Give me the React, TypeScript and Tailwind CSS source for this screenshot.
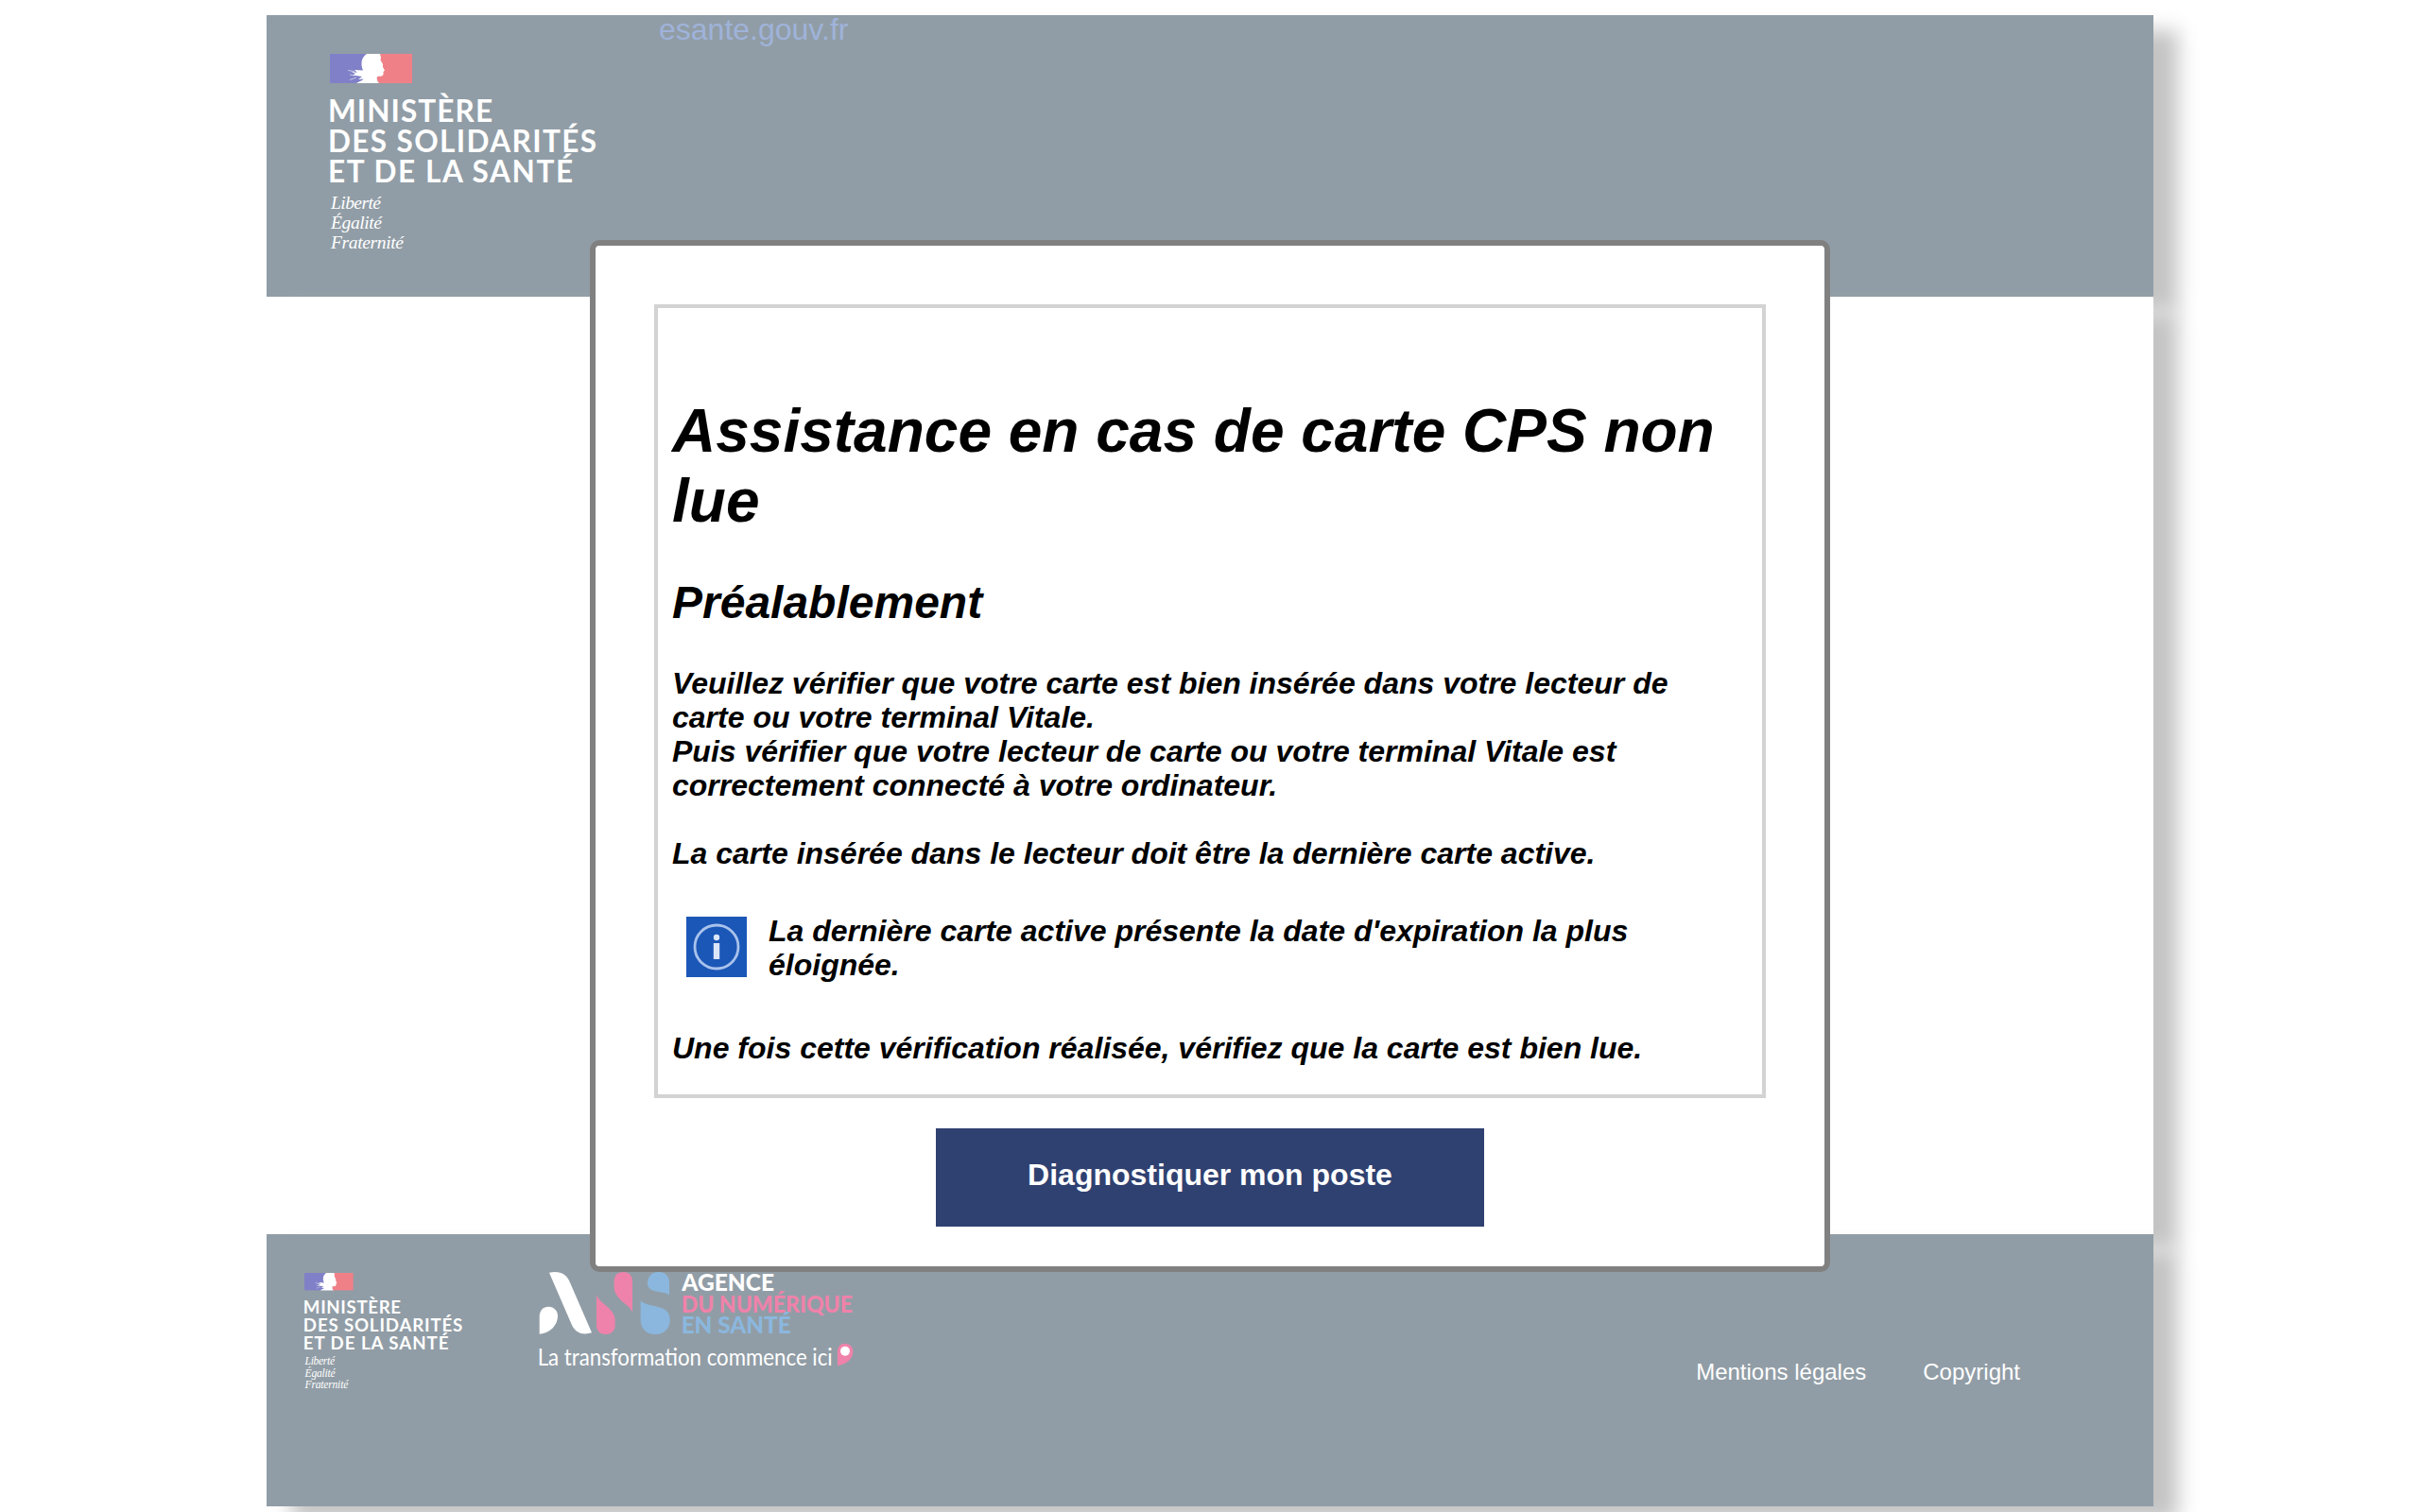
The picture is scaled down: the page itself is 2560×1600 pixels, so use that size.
const sans = "font-['Liberation_Sans',Arial,sans-serif]";

function Ministry({ className }: { className: string }) {
  return (
    <svg viewBox="0 0 290 212" className={`overflow-visible ${className}`} role="img">
      <rect x="0" y="0" width="40" height="31" fill="#8080c8" />
      <rect x="50" y="0" width="37" height="31" fill="#f08087" />
      <path
        d="M39 0H53L54 4L53.500 6.500L56 11L56 14L58 17.500L56.500 19L56.500 22L55 23.500L50 24C49 27 50.500 29.500 52 31H28C31 29 34.500 28.500 35.500 26.500L30 27L34 24L24 22.500L27 21L22 18.500L29 20L26 17L35 17.500C32.500 12 32.500 4 39 0Z"
        fill="#fff"
      />
      <path d="M19 17.500l7 1M21 22l5 1M21 27.500l7 -2.500" stroke="#fff" strokeWidth="0.9" opacity="0.6" fill="none" />
      <g fill="#fff" fontFamily="Lato, sans-serif" fontWeight="700" fontSize="31.500">
        <text x="-2" y="72.300" textLength="174">MINISTÈRE</text>
        <text x="-2" y="104.300" textLength="284">DES SOLIDARITÉS</text>
        <text x="-2" y="136.300" textLength="259">ET DE LA SANTÉ</text>
      </g>
      <g fill="#fff" fontFamily="Liberation Serif, serif" fontStyle="italic" fontSize="19.5">
        <text x="1" y="163.700" textLength="53">Liberté</text>
        <text x="1" y="184.700" textLength="54">Égalité</text>
        <text x="1" y="206" textLength="77">Fraternité</text>
      </g>
    </svg>
  );
}

function AgencyLogo() {
  return (
    <svg viewBox="60 45 1002 315" className="h-[105px] w-[334px] overflow-visible" role="img">
      <g fill="#fff">
        <path d="M62 245V190C62 170 74 158 91 158C108 158 120 171 120 188C120 215 96 243 62 245Z" />
        <path d="M93 50C125 44 148 52 159 82L228 241C200 249 176 243 163 212Z" />
      </g>
      <g fill="#ef82aa">
        <path d="M243 121C250 146 302 165 302 200V217C302 235 290 246 272 246C254 246 243 235 243 217Z" />
        <path d="M357 176C350 152 299 135 299 97V78C299 59 311 48 328 48C346 48 357 59 357 78Z" />
      </g>
      <g fill="#8bb7de">
        <path d="M474 122C462 106 405 119 405 84C405 62 420 48 440 48C461 48 474 61 474 82Z" />
        <path d="M383 138C400 164 476 145 476 199C476 229 458 246 430 246C401 246 383 229 383 199Z" />
      </g>
      <g fontFamily="Lato, sans-serif" fontWeight="900" fontSize="72">
        <text x="514" y="107" fill="#fff" textLength="293" lengthAdjust="spacingAndGlyphs">AGENCE</text>
        <text x="512" y="176" fill="#ef82aa" textLength="544" lengthAdjust="spacingAndGlyphs">DU NUMÉRIQUE</text>
        <text x="512" y="244" fill="#8bb7de" textLength="348" lengthAdjust="spacingAndGlyphs">EN SANTÉ</text>
      </g>
      <text x="56" y="345" fill="#fff" fontFamily="Lato, sans-serif" fontSize="77" textLength="936" lengthAdjust="spacingAndGlyphs">
        La transformation commence ici
      </text>
      <path d="M1008 345V300C1008 284 1018 275 1032 275C1047 275 1057 286 1057 301C1057 326 1032 343 1008 345Z" fill="#ef82aa" />
      <circle cx="1032" cy="299" r="15" fill="#fff" />
    </svg>
  );
}

function InfoIcon() {
  return (
    <svg viewBox="0 0 64 64" className="mt-[3px] size-16 shrink-0">
      <rect width="64" height="64" fill="#1b57b7" />
      <circle cx="32" cy="32" r="23" fill="none" stroke="#a9c2ec" strokeWidth="2.800" />
      <circle cx="32" cy="22" r="3.200" fill="#dbe6f8" />
      <rect x="28.800" y="28" width="6.400" height="17" fill="#dbe6f8" />
    </svg>
  );
}

export default function App() {
  return (
    <div className={`relative h-[1600px] w-[2560px] overflow-hidden bg-white pt-4 text-black ${sans}`}>
      <div className="mx-auto flex w-[1996px] flex-col">
        <header className="flex h-[298px] bg-[#919da6] shadow-[26px_16px_20px_#c4c4c4]">
          <Ministry className="mt-[41px] ml-[67px] h-[212px] w-[290px]" />
          <a className="-mt-[3px] ml-[58px] text-[32px] leading-[36px] text-[#9fb3da]">esante.gouv.fr</a>
        </header>
        <main className="h-[992px] bg-white shadow-[26px_16px_20px_#c4c4c4]" />
        <footer className="flex h-[288px] items-start bg-[#919da6] shadow-[26px_16px_20px_#c4c4c4]">
          <Ministry className="mt-[40.700px] ml-10 h-[125.700px] w-[172px]" />
          <div className="mt-[39px] ml-[76px]">
            <AgencyLogo />
          </div>
          <nav className="mt-[132px] mr-[141px] ml-auto flex gap-[60px] text-2xl leading-7 text-white">
            <a>Mentions légales</a>
            <a>Copyright</a>
          </nav>
        </footer>
      </div>

      <div className="absolute top-[254px] left-[624px] flex h-[1092px] w-[1312px] flex-col items-center rounded-[10px] border-[6px] border-[#808080] bg-white pt-[62px]">
        <section className="h-[840px] w-[1176px] border-4 border-[#d3d3d3] pt-[93px] pr-4 pl-[15px] text-[32px] leading-[36px] font-bold italic">
          <h1 className="text-[64px] leading-[74px]">Assistance en cas de carte CPS non lue</h1>
          <h2 className="mt-11 text-[48px] leading-[54px]">Préalablement</h2>
          <p className="mt-10">
            Veuillez vérifier que votre carte est bien insérée dans votre lecteur de carte ou votre terminal Vitale.
            <br />
            Puis vérifier que votre lecteur de carte ou votre terminal Vitale est correctement connecté à votre ordinateur.
          </p>
          <p className="mt-9">La carte insérée dans le lecteur doit être la dernière carte active.</p>
          <div className="mt-[46px] ml-[15px] flex h-[68px] gap-[23px]">
            <InfoIcon />
            <p className="w-[960px]">La dernière carte active présente la date d'expiration la plus éloignée.</p>
          </div>
          <p className="mt-14">Une fois cette vérification réalisée, vérifiez que la carte est bien lue.</p>
        </section>
        <button className="mt-8 h-[104px] w-[580px] bg-[#2f4171] pb-1.5 text-[32px] font-bold text-white">
          Diagnostiquer mon poste
        </button>
      </div>
    </div>
  );
}
